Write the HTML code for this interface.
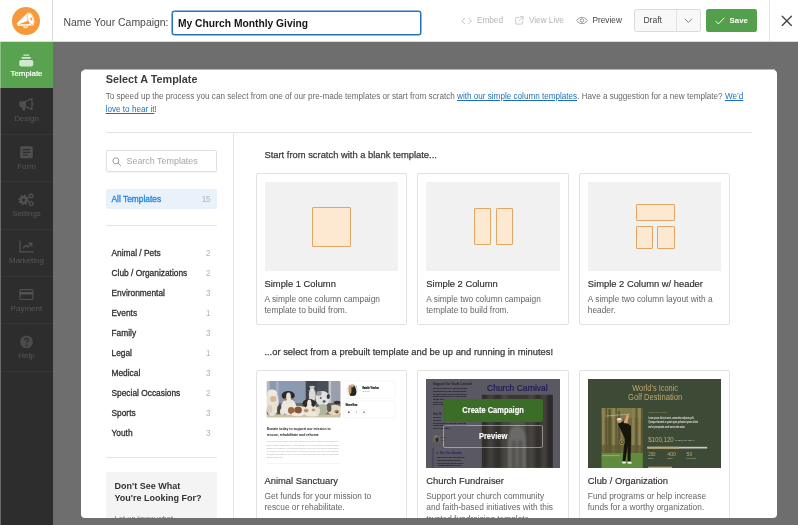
<!DOCTYPE html>
<html lang="en">
<head>
<meta charset="utf-8">
<title>Campaign Builder</title>
<style>
*{box-sizing:border-box;margin:0;padding:0}
html,body{width:798px;height:525px;overflow:hidden;background:#6e6e6e;font-family:"Liberation Sans",sans-serif;color:#444}
.abs{position:absolute}
#top{will-change:transform;position:absolute;left:0;top:0;width:798px;height:42px;background:#fff;border-bottom:1px solid #dcdcdc}
#logo{position:absolute;left:0;top:0;width:53px;height:41px;border-right:1px solid #dcdcdc}
#lbl{position:absolute;left:63.5px;top:16.2px;font-size:10.45px;color:#4a4a4a;line-height:13px;white-space:nowrap}
#name{position:absolute;left:172px;top:11px;width:249px;height:24px;border:1.4px solid #1e73be;border-radius:2.5px;background:#fff;box-shadow:0 0 0 .5px #1e73be}
#name span{position:absolute;left:5px;top:5.2px;font-size:10.28px;font-weight:bold;color:#151515;line-height:13px;white-space:nowrap}
.tl{position:absolute;top:14px;font-size:8.4px;line-height:13px;white-space:nowrap}
#side{will-change:transform;position:absolute;left:0;top:42px;width:53px;height:483px;background:#2d2d2d}
.tab{position:absolute;left:0;width:53px;height:47.3px;border-bottom:1px solid #363636;color:#575757;font-size:7.95px;text-align:center}
.tab span{position:absolute;left:0;width:53px;top:26.5px;line-height:10px}
.tab svg{position:absolute}
#modal{will-change:transform;position:absolute;left:81px;top:70px;width:696px;height:448px;background:#fff;border-radius:4px;overflow:hidden}

#modal .t1{position:absolute;left:24.7px;top:2px;font-size:10.85px;font-weight:bold;color:#3c3c3c;line-height:14px;white-space:nowrap}
#modal p.intro{position:absolute;left:24.7px;top:20.2px;width:650px;font-size:8.15px;line-height:13.3px;color:#686868}
#modal a{color:#1e6fc0;text-decoration:underline}
.hr{position:absolute;height:1px;background:#e4e4e4}
.vr{position:absolute;width:1px;background:#e4e4e4}
#search{position:absolute;left:25px;top:80.5px;width:111px;height:21.5px;border:1px solid #e0e0e0;border-radius:2px;box-shadow:0 1px 1.5px rgba(0,0,0,.05)}
#search span{position:absolute;left:19.5px;top:4px;font-size:8.94px;line-height:12px;color:#a6a6a6;white-space:nowrap}
#all{position:absolute;left:25px;top:119.5px;width:111px;height:19.5px;background:#e9f1fb;border-radius:2px}
.cat{position:absolute;left:30.5px;width:100px;height:12px;font-size:8.37px;line-height:12px;color:#2f2f2f;white-space:nowrap}
.cat b{font-weight:normal;position:absolute;right:1.3px;top:.7px;color:#b4b4b4;font-size:8.2px;letter-spacing:-.3px}
#dont{position:absolute;left:25px;top:402.2px;width:111px;height:60px;background:#f4f4f4}
#dont h4{position:absolute;left:8.5px;top:8.8px;font-size:9px;line-height:12px;font-weight:bold;color:#333;white-space:nowrap}
#dont p{position:absolute;left:8.5px;top:41px;font-size:7.6px;line-height:12px;color:#777;white-space:nowrap}
.sec{position:absolute;left:183.4px;font-size:9.4px;line-height:12px;color:#3a3a3a;white-space:nowrap}
.card{position:absolute;width:151.5px;height:151.5px;border:1px solid #e2e2e2;border-radius:2px;background:#fff}
.card .th{position:absolute;left:8px;top:8px;width:133.7px;height:88.7px;background:#f1f1f1;overflow:hidden}
.card h3{position:absolute;left:8px;top:103.5px;font-size:9.4px;line-height:12px;font-weight:normal;color:#2f2f2f;white-space:nowrap}
.card p{position:absolute;left:8px;top:119.7px;font-size:8.35px;line-height:11.6px;color:#666;white-space:nowrap}
.bx{position:absolute;background:#fde9d2;border:1.3px solid #e0a665;border-radius:1px}
.cbtn{color:#fff;font-weight:bold;font-size:8.7px;text-align:center;-webkit-text-stroke:.15px #fff}
.cbtn span{position:absolute;left:0;right:0;top:50%;margin-top:-6px;line-height:12px;transform:scaleX(.86);white-space:nowrap}
.cat{-webkit-text-stroke:.28px currentColor}.sec{-webkit-text-stroke:.25px currentColor}.card h3{-webkit-text-stroke:.16px currentColor}
.cat b{-webkit-text-stroke:0}
</style>
</head>
<body>
<div id="top">
  <div id="logo">
    <svg class="abs" style="left:12px;top:6.5px" width="28" height="28" viewBox="0 0 28 28">
      <circle cx="14" cy="14" r="14" fill="#f6993a"/>
      <path d="M4.8 16.2 L15.2 6.2 C17.2 4.6 20 6.2 21.6 10 C23.2 13.8 22.8 17.4 21 18.4 L18 18.6 L6 19 Z" fill="#fff"/>
      <path d="M6.4 17.4 L16.4 13.4 L17.8 17 Z" fill="#f6993a"/>
      <ellipse cx="18.6" cy="12" rx="2.9" ry="6" transform="rotate(-22 18.6 12)" fill="#fff" stroke="#f6993a" stroke-width=".55"/>
      <ellipse cx="19.3" cy="12" rx=".8" ry="1.9" transform="rotate(-22 19.3 12)" fill="#f6993a"/>
      <path d="M11.2 19 C11.6 22 15.6 22 16.2 18.8 Z" fill="#fff"/>
      <path d="M12.4 19.2 C12.8 20.8 14.6 20.8 15 19.2 Z" fill="#f6993a"/>
    </svg>
  </div>
  <div id="lbl">Name Your Campaign:</div>

  <svg class="abs" style="left:461px;top:16.5px" width="12" height="8" viewBox="0 0 12 8"><path d="M3.5 1.4 L.9 4 L3.5 6.6 M7.7 1.4 L10.3 4 L7.7 6.6" fill="none" stroke="#b9b9b9" stroke-width=".9" stroke-linecap="round" stroke-linejoin="round"/></svg>
  <div class="tl" style="left:477px;color:#b4b4b4;font-size:8.2px">Embed</div>
  <svg class="abs" style="left:515.2px;top:15.8px" width="9" height="9" viewBox="0 0 10 10"><path d="M4.2 1.6 H1.6 Q.8 1.6 .8 2.4 V8.2 Q.8 9 1.6 9 H7.4 Q8.2 9 8.2 8.2 V5.8 M5.8 .8 H9 V4 M9 .8 L4.4 5.4" fill="none" stroke="#b9b9b9" stroke-width=".85" stroke-linecap="round" stroke-linejoin="round"/></svg>
  <div class="tl" style="left:529px;color:#b4b4b4;font-size:8.18px">View Live</div>
  <svg class="abs" style="left:575.5px;top:16px" width="12" height="9" viewBox="0 0 12 9"><path d="M.7 4.5 C2.4 2.1 4.2 1.4 6 1.4 S9.6 2.1 11.3 4.5 C9.6 6.9 7.8 7.6 6 7.6 S2.4 6.9 .7 4.5 Z" fill="none" stroke="#8a8a8a" stroke-width=".85"/><circle cx="6" cy="4.5" r="1.7" fill="none" stroke="#8a8a8a" stroke-width=".85"/></svg>
  <div class="tl" style="left:592.5px;color:#444;font-size:8.27px">Preview</div>
  <div class="abs" style="left:634px;top:9px;width:67px;height:23.3px;border:1px solid #dbdbdb;border-radius:2.5px;background:#f8f8f8"></div>
  <div class="abs" style="left:676px;top:9.5px;width:1px;height:22.3px;background:#e2e2e2"></div>
  <div class="tl" style="left:643.4px;color:#444;font-size:8.58px">Draft</div>
  <svg class="abs" style="left:683.5px;top:17.8px" width="9" height="6" viewBox="0 0 9 6"><path d="M1 1 L4.4 4.4 L7.8 1" fill="none" stroke="#777" stroke-width=".9" stroke-linecap="round" stroke-linejoin="round"/></svg>
  <div class="abs" style="left:706.3px;top:9px;width:50.5px;height:23px;border-radius:2.5px;background:#549f4c"></div>
  <svg class="abs" style="left:715px;top:16.5px" width="10" height="8" viewBox="0 0 10 8"><path d="M.9 4.4 L3.4 6.9 L9.1 1" fill="none" stroke="#fff" stroke-width="1" stroke-linecap="round" stroke-linejoin="round"/></svg>
  <div class="tl" style="left:729.6px;color:#fff;font-size:7.8px;font-weight:bold">Save</div>
  <div class="abs" style="left:769px;top:0;width:1px;height:41px;background:#e4e4e4"></div>
  <svg class="abs" style="left:781px;top:15px" width="12" height="12" viewBox="0 0 12 12"><path d="M1.2 1.2 L10.4 10.4 M10.4 1.2 L1.2 10.4" fill="none" stroke="#444" stroke-width="1.35" stroke-linecap="round"/></svg>
  <div id="name"><span>My Church Monthly Giving</span></div>
</div>
<div id="side">
<div class="tab" style="top:0px;height:45.8px;background:#58a250;color:#fff;border-bottom:none;font-size:7.9px;-webkit-text-stroke:.2px #fff;"><svg style="left:0;top:.6px" width="53" height="30" viewBox="0 0 53 30"><g fill="#d2e7cf"><rect x="23.3" y="11.6" width="6" height="1.2" rx=".5"/><rect x="21.5" y="13.9" width="9.4" height="1.8" rx=".6"/><rect x="19.2" y="17" width="14.1" height="6.4" rx="1.8"/></g></svg><span>Template</span></div>
<div class="tab" style="top:45.8px;"><svg style="left:0;top:.6px" width="53" height="30" viewBox="0 0 53 30"><g fill="#4f4f4f"><path d="M19.3 14.6 Q19.3 13.2 20.7 13.2 H25 V18.9 H20.7 Q19.3 18.9 19.3 17.5 Z"/><path d="M25.4 13.5 L32 10.6 V21.3 L25.4 18.6 Z" fill="none" stroke="#4f4f4f" stroke-width="1.3" stroke-linejoin="round"/><path d="M21.8 18.9 H25 L25.4 22 Q25.4 22.6 24.8 22.6 H23.4 Q22.7 22.6 22.5 22 Z"/><rect x="32.4" y="14.9" width="1" height="2.2" rx=".4"/></g></svg><span>Design</span></div>
<div class="tab" style="top:93.1px;"><svg style="left:0;top:.6px" width="53" height="30" viewBox="0 0 53 30"><g><rect x="20.2" y="10.3" width="12.6" height="12" rx="1.5" fill="#4f4f4f"/><path d="M22.8 13.6 H30.2 M22.8 16.3 H30.2 M22.8 19 H27.6" stroke="#2d2d2d" stroke-width="1.2"/></g></svg><span>Form</span></div>
<div class="tab" style="top:140.4px;"><svg style="left:0;top:.6px" width="53" height="30" viewBox="0 0 53 30"><g fill="none" stroke="#515151"><circle cx="23.6" cy="16.9" r="2.9" stroke-width="2.6"/><circle cx="23.6" cy="16.9" r="4.6" stroke-width="1.6" stroke-dasharray="1.8 1.8"/><circle cx="31" cy="13" r="1.7" stroke-width="1.2"/><circle cx="31" cy="13" r="2.6" stroke-width=".8" stroke-dasharray="1 1"/><circle cx="31" cy="20.6" r="1.7" stroke-width="1.2"/><circle cx="31" cy="20.6" r="2.6" stroke-width=".8" stroke-dasharray="1 1"/></g></svg><span>Settings</span></div>
<div class="tab" style="top:187.7px;"><svg style="left:0;top:.6px" width="53" height="30" viewBox="0 0 53 30"><g fill="none" stroke="#515151" stroke-width="1.3" stroke-linecap="round" stroke-linejoin="round"><path d="M20 11 V21.8 H33.4"/><path d="M23.4 17.8 L26 15.2 L28 17 L31.6 13.4 M29 13.2 H31.8 V16"/></g></svg><span>Marketing</span></div>
<div class="tab" style="top:235.0px;"><svg style="left:0;top:.6px" width="53" height="30" viewBox="0 0 53 30"><g><rect x="19.9" y="11.7" width="13" height="9.8" rx="1.2" fill="none" stroke="#515151" stroke-width="1.2"/><rect x="19.9" y="14" width="13" height="2.6" fill="#515151"/></g></svg><span>Payment</span></div>
<div class="tab" style="top:282.3px;"><svg style="left:0;top:.6px" width="53" height="30" viewBox="0 0 53 30"><g><circle cx="26.5" cy="16.9" r="6.4" fill="#4a4a4a"/><path d="M24.6 15.2 C24.6 12.8 28.5 12.8 28.5 15.2 C28.5 16.6 26.6 16.6 26.6 18.2" fill="none" stroke="#2d2d2d" stroke-width="1.3"/><circle cx="26.6" cy="20.3" r=".85" fill="#2d2d2d"/></g></svg><span>Help</span></div>
<div class="abs" style="left:0;top:0;width:1.1px;height:483px;background:#6b6b6b"></div><div class="abs" style="left:0;top:0;width:1.1px;height:45.8px;background:#8fc088"></div>
</div>
<div class="abs" style="left:83.5px;top:69px;width:691px;height:1px;background:rgba(255,255,255,.5)"></div>
<div id="modal"><div class="abs" id="mi" style="left:0;top:-.5px;width:696px;height:449px">
<div class="t1">Select A Template</div>
<p class="intro">To speed up the process you can select from one of our pre-made templates or start from scratch <a>with our simple column templates</a>. Have a suggestion for a new template? <a>We&#8217;d love to hear it</a>!</p>
<div class="hr" style="left:24.7px;top:62px;width:646px"></div>
<div class="vr" style="left:152px;top:62px;height:390px"></div>
<div id="search"><svg class="abs" style="left:5.4px;top:5.6px" width="9.5" height="9.5" viewBox="0 0 9.5 9.5"><circle cx="3.9" cy="3.9" r="3" fill="none" stroke="#9d9d9d" stroke-width="1"/><path d="M6.1 6.1 L8.6 8.6" stroke="#9d9d9d" stroke-width="1" stroke-linecap="round"/></svg><span>Search Templates</span></div>
<div id="all"></div>
<div class="cat" style="top:123.5px;color:#1b84e2">All Templates<b>15</b></div>
<div class="hr" style="left:25px;top:155.5px;width:111px"></div>
<div class="cat" style="top:177.6px">Animal / Pets<b>2</b></div>
<div class="cat" style="top:197.6px">Club / Organizations<b>2</b></div>
<div class="cat" style="top:217.6px">Environmental<b>3</b></div>
<div class="cat" style="top:237.6px">Events<b>1</b></div>
<div class="cat" style="top:257.6px">Family<b>3</b></div>
<div class="cat" style="top:277.6px">Legal<b>1</b></div>
<div class="cat" style="top:297.6px">Medical<b>3</b></div>
<div class="cat" style="top:317.6px">Special Occasions<b>2</b></div>
<div class="cat" style="top:337.6px">Sports<b>3</b></div>
<div class="cat" style="top:357.6px">Youth<b>3</b></div>

<div class="hr" style="left:25px;top:387.5px;width:111px"></div>
<div id="dont"><h4>Don't See What<br>You're Looking For?</h4><p>Let us know what</p></div>
<div class="sec" style="top:79.5px">Start from scratch with a blank template...</div>
<div class="card" style="left:174.5px;top:103.5px"><div class="th"><div class="bx" style="left:47.3px;top:25px;width:39.5px;height:39.5px"></div></div><h3>Simple 1 Column</h3><p>A simple one column campaign<br>template to build from.</p></div>
<div class="card" style="left:336.3px;top:103.5px"><div class="th"><div class="bx" style="left:47.5px;top:26px;width:17.7px;height:37px"></div><div class="bx" style="left:69.5px;top:26px;width:17.7px;height:37px"></div></div><h3>Simple 2 Column</h3><p>A simple two column campaign<br>template to build from.</p></div>
<div class="card" style="left:497.8px;top:103.5px"><div class="th"><div class="bx" style="left:47.8px;top:22px;width:39px;height:17px"></div><div class="bx" style="left:47.8px;top:43.5px;width:17.2px;height:23.5px"></div><div class="bx" style="left:69.6px;top:43.5px;width:17.2px;height:23.5px"></div></div><h3>Simple 2 Column w/ header</h3><p>A simple two column layout with a<br>header.</p></div>
<div class="sec" style="top:276.5px">...or select from a prebuilt template and be up and running in minutes!</div>
<div class="card" style="left:174.5px;top:300.5px;height:170px" id="c4"><div class="th" id="th4" style="background:#fff"><svg class="abs" style="left:0;top:0" width="133.7" height="89" viewBox="0 0 133.7 89" preserveAspectRatio="none">
<defs><filter id="b1" x="-10%" y="-10%" width="120%" height="120%"><feGaussianBlur stdDeviation=".55"/></filter><clipPath id="cp1"><rect x="0" y="0" width="73.8" height="36.6" rx=".9"/></clipPath><clipPath id="cpa"><circle cx="87.2" cy="10.7" r="6.4"/></clipPath></defs>
<rect width="133.7" height="88.7" fill="#fff"/>
<g transform="translate(1.7 2)" clip-path="url(#cp1)"><g filter="url(#b1)">
<rect x="-2" y="-2" width="78" height="41" fill="#8b9ab1"/>
<rect x="-2" y="-2" width="5" height="24" fill="#b3bac5"/>
<rect x="9.5" y="-2" width="2.5" height="22" fill="#a3afc1"/>
<rect x="39" y="-2" width="23" height="26" fill="#3f444b"/>
<rect x="50" y="-2" width="12" height="12" fill="#4a5058"/>
<rect x="62" y="-2" width="14" height="26" fill="#9a9fae"/>
<rect x="62" y="-2" width="2.4" height="26" fill="#c3c6cd"/>
<rect x="-2" y="22" width="78" height="12" fill="#6d6a64"/>
<rect x="-2" y="33.4" width="78" height="6" fill="#cdc1aa"/>
<ellipse cx="5.5" cy="22" rx="6.6" ry="13" fill="#e9e1d5"/>
<ellipse cx="5.5" cy="12" rx="5" ry="3.5" fill="#efe9e0"/>
<ellipse cx="6.5" cy="18" rx="3" ry="3" fill="#d6b896"/>
<ellipse cx="3" cy="28" rx="2.5" ry="4" fill="#d9cdb9"/>
<ellipse cx="12.8" cy="28.5" rx="2.4" ry="4.5" fill="#4a4743"/>
<ellipse cx="15.5" cy="30.5" rx="2.2" ry="3.5" fill="#e6e0d6"/>
<ellipse cx="22" cy="26" rx="7.5" ry="8" fill="#ece7e0"/>
<ellipse cx="21.5" cy="14.5" rx="6.6" ry="4.6" fill="#2b2a2d"/>
<ellipse cx="21.8" cy="16" rx="2.4" ry="4.4" fill="#e4dfd8"/>
<ellipse cx="22" cy="19.3" rx="3.6" ry="2.4" fill="#e9e3da"/>
<ellipse cx="18.6" cy="18.4" rx="1.5" ry="1.2" fill="#a77848"/>
<ellipse cx="25.5" cy="18" rx="1.4" ry="1.1" fill="#a77848"/>
<ellipse cx="31" cy="30" rx="9" ry="5.2" fill="#efe9e1"/>
<ellipse cx="24.5" cy="29.5" rx="3.2" ry="3.4" fill="#9a6840"/>
<ellipse cx="31.4" cy="29" rx="3.8" ry="3.6" fill="#87542f"/>
<ellipse cx="28" cy="33" rx="3" ry="1.6" fill="#f1ebe2"/>
<ellipse cx="45.6" cy="14" rx="3.4" ry="7.5" fill="#dcdad7"/>
<ellipse cx="45.4" cy="8" rx="4" ry="3.2" fill="#c4c4c8"/>
<ellipse cx="42" cy="7.6" rx="1.3" ry="2.2" fill="#3a3a40"/>
<ellipse cx="48.8" cy="7.6" rx="1.3" ry="2.2" fill="#44444a"/>
<ellipse cx="45.4" cy="9.4" rx="1.6" ry="1.6" fill="#e6e4e2"/>
<ellipse cx="43" cy="29" rx="7.4" ry="6.4" fill="#ebe5dc"/>
<ellipse cx="42.4" cy="22.5" rx="6.6" ry="4.6" fill="#2d2b2b"/>
<ellipse cx="42.6" cy="23" rx="2.2" ry="4.6" fill="#ebe6de"/>
<ellipse cx="42.8" cy="26.6" rx="3.4" ry="2.4" fill="#ece6dd"/>
<ellipse cx="39.4" cy="29.6" rx="2.4" ry="1.8" fill="#bd8f5e"/>
<ellipse cx="46.8" cy="29" rx="1.8" ry="1.5" fill="#c19563"/>
<ellipse cx="47" cy="33" rx="5" ry="2.4" fill="#efe8dc"/>
<ellipse cx="56" cy="17.5" rx="7.2" ry="7.6" fill="#e1e1e2"/>
<ellipse cx="52.4" cy="12.4" rx="2.6" ry="2.4" fill="#9a9ca3"/>
<ellipse cx="56" cy="28.5" rx="5.6" ry="5.4" fill="#b3b69f"/>
<ellipse cx="61.6" cy="15.5" rx="1.6" ry="2.6" fill="#37373c"/>
<ellipse cx="57.4" cy="20.4" rx="1.5" ry="1.2" fill="#4e4a46"/>
<ellipse cx="54" cy="17" rx="1" ry=".9" fill="#5a5a5e"/>
<ellipse cx="51" cy="30" rx="2.2" ry="4" fill="#e3dfd6"/>
<ellipse cx="68" cy="29" rx="7.4" ry="5.2" fill="#e3d7bd"/>
<ellipse cx="62.5" cy="27" rx="2.2" ry="4" fill="#5a5852"/>
<ellipse cx="70.6" cy="21.4" rx="3.6" ry="1.6" fill="#34332f"/>
<ellipse cx="70" cy="30.6" rx="2.4" ry="1.8" fill="#a98658"/>
<ellipse cx="70.4" cy="31.4" rx=".9" ry=".8" fill="#3a3530"/>
</g></g>
<rect x="78.8" y="2.1" width="51.3" height="17.2" rx=".8" fill="#fff" stroke="#efefef" stroke-width=".5"/>
<rect x="78.8" y="21.9" width="51.3" height="16.8" rx=".8" fill="#fff" stroke="#efefef" stroke-width=".5"/>
<g clip-path="url(#cpa)"><rect x="80" y="4" width="14" height="14" fill="#eef2f6"/><g filter="url(#b1)"><ellipse cx="87.8" cy="12.5" rx="3.6" ry="6.5" fill="#2a2624"/><ellipse cx="85" cy="10.5" rx="1.5" ry="4.5" fill="#c59a5c"/><ellipse cx="87.2" cy="6.8" rx="1.7" ry="1.6" fill="#cfa56f"/><ellipse cx="91" cy="8" rx=".8" ry="1.6" fill="#9fc0e6"/></g></g>
<text x="97.4" y="9.7" font-family="Liberation Sans, sans-serif" font-weight="bold" font-size="2.8" fill="#111" stroke="#111" stroke-width=".15" textLength="16.6" lengthAdjust="spacingAndGlyphs">Natalie Vinokur</text>
<text x="97.4" y="13.3" font-family="Liberation Sans, sans-serif" font-size="1.9" fill="#999" textLength="7.6" lengthAdjust="spacingAndGlyphs">Organizer</text>
<text x="80.6" y="27.1" font-family="Liberation Sans, sans-serif" font-weight="bold" font-size="2.8" fill="#111" stroke="#111" stroke-width=".15" textLength="11.8" lengthAdjust="spacingAndGlyphs">Share Now</text>
<g fill="#fff" stroke="#ececec" stroke-width=".5"><circle cx="83.8" cy="33.2" r="2.7"/><circle cx="91.5" cy="33.2" r="2.7"/><circle cx="99.1" cy="33.2" r="2.7"/></g>
<g fill="#555"><rect x="82.9" y="32.5" width="1.8" height="1.4"/><rect x="91.1" y="32.4" width=".7" height="1.6" fill="#999"/><rect x="98.3" y="32.5" width="1.6" height="1.5" fill="#888"/></g>
<g font-family="Liberation Sans, sans-serif" font-weight="bold" font-size="3.1" fill="#1d1d1d"><text x="1.7" y="51.5" textLength="64" lengthAdjust="spacingAndGlyphs">Donate today to support our mission to</text><text x="1.7" y="56.9" textLength="52" lengthAdjust="spacingAndGlyphs">rescue, rehabilitate and rehome</text></g>
<g font-family="Liberation Sans, sans-serif" font-size="1.9" fill="#a9a9a9"><text x="1.7" y="63.4" textLength="72" lengthAdjust="spacingAndGlyphs">Lorem ipsum dolor sit amet, consectetur adipiscing elit, sed do eiusmod tempor incididunt ut</text><text x="1.7" y="66.6" textLength="72" lengthAdjust="spacingAndGlyphs">labore et dolore magna aliqua. Ut enim ad minim veniam, quis nostrud exercitation ullamco</text><text x="1.7" y="69.8" textLength="72" lengthAdjust="spacingAndGlyphs">laboris nisi ut aliquip ex ea commodo consequat. Duis aute irure dolor in reprehenderit</text><text x="1.7" y="73" textLength="72" lengthAdjust="spacingAndGlyphs">in voluptate velit esse cillum dolore eu fugiat nulla pariatur. Excepteur sint occaecat</text><text x="1.7" y="76.2" textLength="72" lengthAdjust="spacingAndGlyphs">cupidatat non proident, sunt in culpa qui officia deserunt mollit anim id est laborum</text><text x="1.7" y="79.4" textLength="16" lengthAdjust="spacingAndGlyphs">officia deserunt</text></g>
<rect x="1.7" y="84.2" width="73.4" height=".4" fill="#e6e6e6"/>
</svg></div><h3 style="top:104px">Animal Sanctuary</h3><p style="top:119.5px">Get funds for your mission to<br>rescue or rehabilitate.</p></div>
<div class="card" style="left:336.3px;top:300.5px;height:170px" id="c5"><div class="th" id="th5" style="background:#5a5963"><svg class="abs" style="left:0;top:0" width="133.7" height="89" viewBox="0 0 133.7 89" preserveAspectRatio="none">
<defs><filter id="b2" x="-10%" y="-10%" width="120%" height="120%"><feGaussianBlur stdDeviation=".9"/></filter><clipPath id="cp2"><rect x="55.8" y="15.7" width="71.1" height="73"/></clipPath></defs>
<rect width="133.7" height="88.7" fill="#5a5963"/>
<g clip-path="url(#cp2)"><g filter="url(#b2)">
<rect x="54" y="14" width="75" height="76" fill="#393634"/>
<rect x="54" y="14" width="7" height="76" fill="#302d2b"/>
<rect x="62" y="14" width="5" height="76" fill="#43403d"/>
<rect x="70" y="14" width="4" height="76" fill="#312e2c"/>
<rect x="76" y="14" width="6" height="76" fill="#474441"/>
<rect x="83" y="34" width="17" height="56" fill="#53514e"/>
<rect x="82" y="14" width="20" height="20" fill="#3b3836"/>
<path d="M82 62 C82 42 100 42 100 62 V90 H82 Z" fill="#6c6a67"/>
<path d="M85.5 68 C85.5 58 90 58 90 68 V90 H85.5 Z" fill="#55524f"/>
<path d="M92 68 C92 58 96.5 58 96.5 68 V90 H92 Z" fill="#55524f"/>
<rect x="102" y="14" width="6" height="76" fill="#474441"/>
<rect x="110" y="14" width="4" height="76" fill="#312e2c"/>
<rect x="116" y="14" width="5" height="76" fill="#423f3c"/>
<rect x="121" y="14" width="7" height="76" fill="#2e2b29"/>
</g></g>
<text x="61.1" y="11.6" font-family="Liberation Sans, sans-serif" font-size="8.44" fill="#1e1a56" stroke="#1e1a56" stroke-width=".2" textLength="60.5" lengthAdjust="spacingAndGlyphs">Church Carnival</text>
<g font-family="Liberation Sans, sans-serif" fill="#1c1c20">
<text x="7" y="6.3" font-weight="bold" font-size="2.9" textLength="39" lengthAdjust="spacingAndGlyphs">Support Our Youth Carnival</text>
<g font-size="2.2" fill="#202026" stroke="#202026" stroke-width=".1"><text x="7" y="10.2" textLength="34" lengthAdjust="spacingAndGlyphs">Join us for a day of fun, games, food and</text><text x="7" y="12.9" textLength="33" lengthAdjust="spacingAndGlyphs">fellowship as we raise funds to support</text><text x="7" y="15.6" textLength="34" lengthAdjust="spacingAndGlyphs">the youth ministry and community outreach</text><text x="7" y="18.3" textLength="33" lengthAdjust="spacingAndGlyphs">programs of our church. All proceeds go</text><text x="7" y="21" textLength="12" lengthAdjust="spacingAndGlyphs">directly to the</text><text x="7" y="23.7" textLength="11" lengthAdjust="spacingAndGlyphs">youth group</text><text x="7" y="26.4" textLength="11" lengthAdjust="spacingAndGlyphs">summer trip.</text></g>
<text x="7" y="35.6" font-weight="bold" font-size="2.9" textLength="9" lengthAdjust="spacingAndGlyphs">Our Ch</text>
<g font-size="2.2" fill="#202026" stroke="#202026" stroke-width=".1"><text x="7" y="39.4" textLength="8" lengthAdjust="spacingAndGlyphs">Our church</text><text x="7" y="42.1" textLength="8" lengthAdjust="spacingAndGlyphs">has served</text><text x="7" y="44.8" textLength="33" lengthAdjust="spacingAndGlyphs">the community for over fifty years with</text><text x="7" y="47.5" textLength="34" lengthAdjust="spacingAndGlyphs">worship, fellowship, education and service</text><text x="7" y="50.2" textLength="17" lengthAdjust="spacingAndGlyphs">for all who enter.</text></g>
<text x="15" y="59" font-weight="bold" font-size="2" textLength="5" lengthAdjust="spacingAndGlyphs">Pastor</text><text x="15" y="62" font-size="1.8" textLength="4" lengthAdjust="spacingAndGlyphs">Host</text>
</g>
<circle cx="10.5" cy="59.7" r="3.8" fill="#6e674f"/><ellipse cx="11" cy="60.5" rx="1.5" ry="2.6" fill="#2a2a38"/><circle cx="10.2" cy="57.6" r="1.1" fill="#8f8468"/>
<rect x="6.7" y="69" width=".6" height="20" fill="#25215e"/>
<text x="10" y="75.2" font-family="Liberation Sans, sans-serif" font-weight="bold" font-size="2.7" fill="#25215e" textLength="26" lengthAdjust="spacingAndGlyphs">&#9888; See You Sunday</text>
<g font-family="Liberation Sans, sans-serif" font-size="2.2" fill="#202026" stroke="#202026" stroke-width=".1"><text x="10.5" y="79.4" textLength="28" lengthAdjust="spacingAndGlyphs">&#8226; Bring a friend, bring your family, and</text><text x="11.6" y="82.1" textLength="23" lengthAdjust="spacingAndGlyphs">your smiles to the morning</text><text x="10.5" y="84.8" textLength="27" lengthAdjust="spacingAndGlyphs">&#8226; Games, food and music for everyone</text><text x="11.6" y="87.5" textLength="24" lengthAdjust="spacingAndGlyphs">activities start at ten o&#8217;clock</text></g>
</svg>
<div class="abs cbtn" style="left:16.4px;top:20.4px;width:100.2px;height:22.2px;background:#3b6c28;border-radius:2px"><span>Create Campaign</span></div>
<div class="abs cbtn" style="left:16.4px;top:45.5px;width:100.2px;height:23.4px;border:1px solid rgba(255,255,255,.42);border-radius:2px"><span>Preview</span></div></div><h3 style="top:104px">Church Fundraiser</h3><p style="top:119.5px">Support your church community<br>and faith-based initiatives with this<br>trusted fundraising template.</p></div>
<div class="card" style="left:497.8px;top:300.5px;height:170px" id="c6"><div class="th" id="th6" style="background:#3c4a36"><svg class="abs" style="left:0;top:0" width="133.7" height="89" viewBox="0 0 133.7 89" preserveAspectRatio="none">
<defs><filter id="b3" x="-10%" y="-10%" width="120%" height="120%"><feGaussianBlur stdDeviation=".6"/></filter><clipPath id="cp3"><rect x="13.5" y="29" width="41.3" height="60"/></clipPath></defs>
<rect width="133.7" height="88.7" fill="#3c4a36"/>
<g font-family="Liberation Sans, sans-serif" font-size="8.7" fill="#bfa96f" text-anchor="middle"><text x="67.1" y="11.7" textLength="45.7" lengthAdjust="spacingAndGlyphs">World&#8217;s Iconic</text><text x="67.1" y="20.7" textLength="54.1" lengthAdjust="spacingAndGlyphs">Golf Destination</text></g>
<g clip-path="url(#cp3)"><g filter="url(#b3)">
<rect x="12" y="27" width="45" height="64" fill="#716a3e"/>
<rect x="12" y="27" width="45" height="12" fill="#7d7c45"/>
<rect x="14" y="27" width="2.6" height="48" fill="#8d8253"/><rect x="17.5" y="27" width="1.6" height="48" fill="#5c5631"/><rect x="20.5" y="30" width="2.2" height="45" fill="#56512d"/><rect x="24.6" y="27" width="2" height="48" fill="#93875a"/><rect x="27.6" y="27" width="1.4" height="48" fill="#625c34"/><rect x="30" y="32" width="2" height="43" fill="#5a5530"/><rect x="33" y="27" width="1.6" height="48" fill="#857a4d"/><rect x="44" y="27" width="2.6" height="48" fill="#8b8050"/><rect x="47.6" y="27" width="1.6" height="48" fill="#5e5832"/><rect x="50.4" y="27" width="2.2" height="48" fill="#938759"/><rect x="53.2" y="27" width="1.6" height="48" fill="#59542f"/>
<rect x="12" y="66" width="45" height="9" fill="#5d5a33" opacity=".7"/>
<rect x="12" y="74" width="45" height="17" fill="#5f8c3d"/>
<rect x="14" y="76.2" width="18" height=".9" fill="#b9a27c"/>
<path d="M30 45 L36 42 L43 47 L43 60 L37 60 Z" fill="#17170f"/>
<path d="M37 58 L43 58 L42.5 82 L39.5 82 L39.8 66 L37.5 82 L34.5 82 Z" fill="#15150e"/>
<path d="M35.5 44 L38.5 36 L41 36.5 L39.5 44.5 Z" fill="#d9a27c"/>
<path d="M38 36.6 L41.5 36 L40 34.6 Z" fill="#d9a27c"/>
<circle cx="31.4" cy="41.6" r="2.3" fill="#d2a17e"/>
<path d="M28.6 40.8 C29 38.4 33.6 38.4 34 40.6 Z" fill="#f2f0ea"/>
<path d="M18 37 L39 35.4" stroke="#cfd0c8" stroke-width=".5"/>
<ellipse cx="36" cy="83.6" rx="2.2" ry="1.1" fill="#ece9e2"/><ellipse cx="41.6" cy="83.8" rx="2.4" ry="1.1" fill="#ece9e2"/>
</g></g>
<circle cx="33.9" cy="63.3" r="2.4" fill="rgba(20,20,10,.55)" stroke="#c9aa5e" stroke-width=".6"/><path d="M33.1 62.1 L35.2 63.3 L33.1 64.5 Z" fill="#c9aa5e"/>
<g font-family="Liberation Sans, sans-serif">
<text x="60.2" y="33.6" font-size="1.9" fill="#b39d62" textLength="18.6" lengthAdjust="spacingAndGlyphs">ABOUT THIS ISSUE</text>
<g font-size="2.6" fill="#dcdcd4" stroke="#dcdcd4" stroke-width=".08"><text x="60.2" y="39.9" textLength="46" lengthAdjust="spacingAndGlyphs">Lorem ipsum dolor sit amet, consectetur adipiscing elit.</text><text x="60.2" y="44.5" textLength="50" lengthAdjust="spacingAndGlyphs">Quisque laoreet a quam quis pulvinar ipsum dolor</text><text x="60.2" y="48.9" textLength="37" lengthAdjust="spacingAndGlyphs">sed ut perspiciatis unde omnis iste natus.</text></g>
<text x="60.2" y="62.6" font-size="7.6" fill="#c6ae70" textLength="25.6" lengthAdjust="spacingAndGlyphs">$100,120</text>
<text x="87.2" y="62" font-size="2" fill="#c8c8be" textLength="19" lengthAdjust="spacingAndGlyphs">of $200,000 raised</text>
<rect x="59.4" y="67.8" width="59.8" height="1.7" fill="#c9c9c9"/><rect x="59.4" y="67.8" width="31.8" height="1.7" fill="#c9a85f"/>
<g font-size="4.8" fill="#bfa96f"><text x="60.2" y="76.6" textLength="7.4" lengthAdjust="spacingAndGlyphs">200</text><text x="79.3" y="76.6" textLength="8.6" lengthAdjust="spacingAndGlyphs">400</text><text x="98.6" y="76.6" textLength="5.6" lengthAdjust="spacingAndGlyphs">50</text></g>
<g font-size="1.5" fill="#c0c0b6"><text x="60.2" y="80" textLength="5.4" lengthAdjust="spacingAndGlyphs">Donors</text><text x="79.3" y="80" textLength="5.4" lengthAdjust="spacingAndGlyphs">Shares</text><text x="98.6" y="80" textLength="9.6" lengthAdjust="spacingAndGlyphs">Days Remain</text></g>
</g>
<rect x="60.2" y="87.7" width="23.9" height="1.2" fill="#c9a85f"/>
</svg></div><h3 style="top:104px">Club / Organization</h3><p style="top:119.5px">Fund programs or help increase<br>funds for a worthy organization.</p></div>
</div></div>
</body>
</html>
